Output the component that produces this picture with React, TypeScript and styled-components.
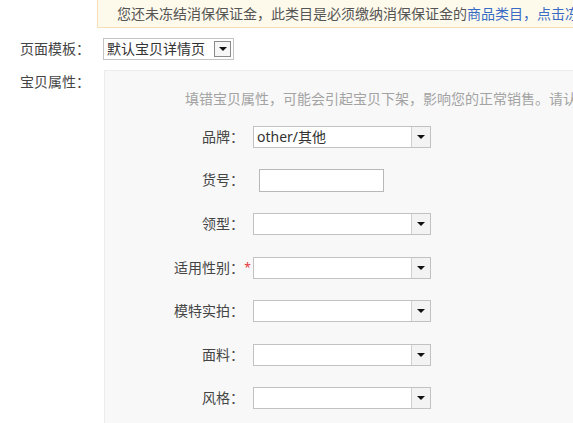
import React from "react";
import styled, { createGlobalStyle } from "styled-components";

const GlobalStyle = createGlobalStyle`
  html, body {
    margin: 0;
    padding: 0;
    background: #ffffff;
  }
  body {
    font-family: "Noto Sans", "Noto Sans CJK SC", sans-serif;
    font-size: 14px;
    color: #444;
  }
`;

const Page = styled.div`
  width: 573px;
  height: 423px;
  overflow: hidden;
`;

const Notice = styled.div`
  margin: -6px 0 0 97px;
  width: 560px;
  height: 34px;
  box-sizing: border-box;
  padding: 8px 0 0 19px;
  background: #fefaeb;
  border: 1px solid #f6dfb6;
  line-height: 22px;
  white-space: nowrap;
  overflow: hidden;
  color: #555;
`;

const Link = styled.span`
  color: #3a6bc4;
`;

const FieldRow = styled.div<{ $top: number }>`
  display: flex;
  align-items: flex-start;
  margin-top: ${(p) => p.$top}px;
`;

const SideLabel = styled.div<{ $width: number; $pad?: number }>`
  width: ${(p) => p.$width}px;
  flex-shrink: 0;
  padding-left: 20px;
  box-sizing: border-box;
  padding-top: ${(p) => p.$pad ?? 0}px;
  line-height: 22px;
  white-space: nowrap;
  color: #444;
`;

const TemplateSelect = styled.div`
  width: 131px;
  height: 22px;
  box-sizing: border-box;
  border: 1px solid #c4c4c4;
  background: #fff;
  display: flex;
  align-items: center;
  justify-content: space-between;
  padding: 0 2px 0 3px;
  line-height: 20px;
  color: #333;
`;

const SmallButton = styled.div`
  width: 17px;
  height: 16px;
  box-sizing: border-box;
  border: 1px solid #8a8a8a;
  background: #f6f6f6;
  display: flex;
  align-items: center;
  justify-content: center;
`;

const Triangle = styled.span`
  width: 0;
  height: 0;
  border-left: 4px solid transparent;
  border-right: 4px solid transparent;
  border-top: 4px solid #111;
`;

const Panel = styled.div`
  width: 520px;
  box-sizing: border-box;
  background: #f8f8f8;
  border: 1px solid #ececec;
  padding: 17px 0 20px 0;
`;

const Hint = styled.div`
  padding-left: 80px;
  line-height: 22px;
  color: #a3a3a3;
  white-space: nowrap;
`;

const Form = styled.div`
  margin-top: 5px;
  display: grid;
  grid-template-columns: 139px 9px auto;
  grid-auto-rows: 43.6px;
  align-items: center;
`;

const Label = styled.div`
  text-align: right;
  line-height: 22px;
  color: #444;
`;

const Star = styled.span`
  color: #e4393c;
  font-size: 12px;
  line-height: 22px;
  text-align: center;
  margin-left: -2px;
`;

const Select = styled.div`
  width: 178px;
  height: 22px;
  box-sizing: border-box;
  border: 1px solid #c2c2c2;
  background: #fff;
  display: flex;
  align-items: stretch;
`;

const SelectValue = styled.div`
  flex: 1;
  padding-left: 3px;
  line-height: 20px;
  color: #333;
`;

const SelectButton = styled.div`
  width: 18px;
  border-left: 1px solid #d0d0d0;
  background: #f3f3f3;
  display: flex;
  align-items: center;
  justify-content: center;
`;

const TextInput = styled.div`
  margin-left: 6px;
  width: 125px;
  height: 23px;
  box-sizing: border-box;
  border: 1px solid #b8b8b8;
  background: #fff;
`;

type Attr = {
  label: string;
  kind: "select" | "input";
  value?: string;
  required?: boolean;
};

const attrs: Attr[] = [
  { label: "品牌：", kind: "select", value: "other/其他" },
  { label: "货号：", kind: "input" },
  { label: "领型：", kind: "select" },
  { label: "适用性别：", kind: "select", required: true },
  { label: "模特实拍：", kind: "select" },
  { label: "面料：", kind: "select" },
  { label: "风格：", kind: "select" },
];

const App: React.FC = () => {
  return (
    <>
      <GlobalStyle />
      <Page>
        <Notice>
          您还未冻结消保保证金，此类目是必须缴纳消保保证金的
          <Link>商品类目</Link>
          <Link>，点击冻结</Link>
        </Notice>
        <FieldRow $top={10}>
          <SideLabel $width={103}>页面模板：</SideLabel>
          <TemplateSelect>
            <span>默认宝贝详情页</span>
            <SmallButton>
              <Triangle />
            </SmallButton>
          </TemplateSelect>
        </FieldRow>
        <FieldRow $top={10}>
          <SideLabel $width={104} $pad={1}>宝贝属性：</SideLabel>
          <Panel>
            <Hint>填错宝贝属性，可能会引起宝贝下架，影响您的正常销售。请认真准确填写</Hint>
            <Form>
              {attrs.map((a) => (
                <React.Fragment key={a.label}>
                  <Label>{a.label}</Label>
                  {a.required ? <Star>*</Star> : <span />}
                  {a.kind === "select" ? (
                    <Select>
                      <SelectValue>{a.value ?? ""}</SelectValue>
                      <SelectButton>
                        <Triangle />
                      </SelectButton>
                    </Select>
                  ) : (
                    <TextInput />
                  )}
                </React.Fragment>
              ))}
            </Form>
          </Panel>
        </FieldRow>
      </Page>
    </>
  );
};

export default App;
